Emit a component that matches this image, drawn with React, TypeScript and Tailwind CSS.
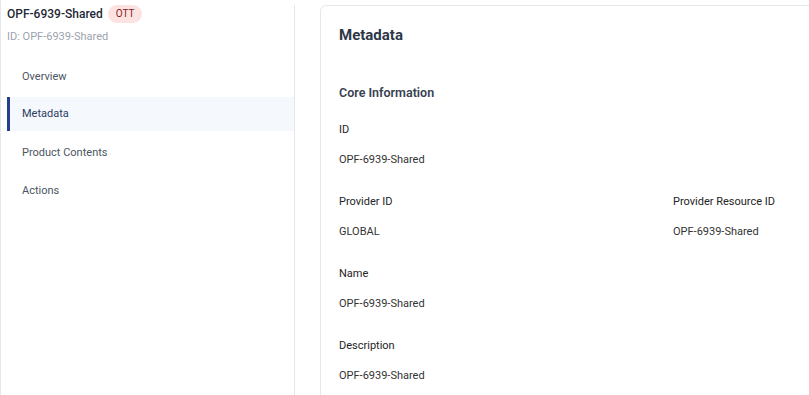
import React from "react";

const navItems = ["Overview", "Metadata", "Product Contents", "Actions"];

function Field({ label, value }: { label: string; value: string }) {
  return (
    <div className="flex flex-col">
      <div className="h-[16px] leading-[16px] text-[11px] text-[#242424]">{label}</div>
      <div className="mt-[14px] h-[16px] leading-[16px] text-[11px] text-[#333333]">{value}</div>
    </div>
  );
}

export default function App() {
  return (
    <div
      className="w-[809px] h-[395px] overflow-hidden bg-white flex border-l border-[#e5e7eb]"
      style={{ fontFamily: 'Roboto, "Noto Sans", sans-serif' }}
    >
      <aside className="w-[294px] shrink-0 mt-[5px] border-r border-[#e5e7eb] pl-[6px]">
        <div className="flex items-center h-[18px]">
          <span className="text-[12px] font-medium text-[#1f2937] leading-[18px]">OPF-6939-Shared</span>
          <span className="ml-[5px] h-[18px] px-[8px] rounded-full bg-[#fde2e2] text-[#7f1d1d] text-[10px] leading-[18px]">
            OTT
          </span>
        </div>
        <div className="mt-[6px] h-[15px] leading-[15px] text-[11px] text-[#9ca3af]">ID: OPF-6939-Shared</div>
        <nav className="mt-[15px] flex flex-col gap-[4px]">
          {navItems.map((item) => {
            const active = item === "Metadata";
            return (
              <div
                key={item}
                className={
                  active
                    ? "h-[34px] flex items-center pt-[1px] pl-[12px] border-l-[3px] border-[#23408e] bg-[#f5f9fd] text-[11px] text-[#2d3b63]"
                    : "h-[34px] flex items-center pt-[2px] pl-[15px] text-[11px] text-[#4b5563]"
                }
              >
                {item}
              </div>
            );
          })}
        </nav>
      </aside>
      <main className="ml-[25px] mt-[5px] w-[560px] h-[420px] shrink-0 border border-[#e5e7eb] rounded-[6px] pl-[18px] pt-[19px]">
        <h1 className="h-[20px] leading-[20px] text-[15px] font-bold text-[#2d3748]">Metadata</h1>
        <h2 className="mt-[40px] h-[16px] leading-[16px] text-[12.5px] font-semibold text-[#374151]">Core Information</h2>
        <div className="mt-[21px] grid grid-cols-[334px_1fr] gap-y-[26px]">
          <div className="col-span-2">
            <Field label="ID" value="OPF-6939-Shared" />
          </div>
          <Field label="Provider ID" value="GLOBAL" />
          <Field label="Provider Resource ID" value="OPF-6939-Shared" />
          <div className="col-span-2">
            <Field label="Name" value="OPF-6939-Shared" />
          </div>
          <div className="col-span-2">
            <Field label="Description" value="OPF-6939-Shared" />
          </div>
        </div>
      </main>
    </div>
  );
}
